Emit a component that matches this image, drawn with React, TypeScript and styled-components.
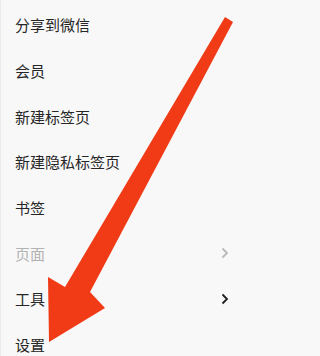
import React from 'react'
import styled, { createGlobalStyle } from 'styled-components'

const GlobalStyle = createGlobalStyle`
    html, body {
        margin: 0;
        padding: 0;
        background: #f8f8f8;
    }
    #root {
        width: 240px;
        height: 356px;
    }
`

const Screen = styled.div`
    position: relative;
    width: 240px;
    height: 356px;
    overflow: hidden;
    background: #f8f8f8;
    border-left: 1px solid #ebebeb;
    box-sizing: border-box;
    font-family: "Noto Sans CJK SC", "Noto Sans", sans-serif;
`

const Menu = styled.div`
    display: flex;
    flex-direction: column;
    padding-top: 2px;
`

const Item = styled.div<{ $disabled?: boolean }>`
    height: 45.7px;
    display: flex;
    align-items: center;
    justify-content: space-between;
    padding: 0 11px 0 14px;
    font-size: 15px;
    color: ${p => (p.$disabled ? '#b3b3b3' : '#262626')};
`

const Chevron = styled.svg<{ $disabled?: boolean }>`
    width: 8px;
    height: 12px;
    stroke: ${p => (p.$disabled ? '#b8b8b8' : '#1e1e1e')};
    fill: none;
    stroke-width: 1.8;
`

const ArrowLayer = styled.svg`
    position: absolute;
    left: 0;
    top: 0;
    width: 240px;
    height: 356px;
    pointer-events: none;
`

interface Entry {
    label: string,
    sub?: boolean,
    disabled?: boolean,
}

const entries: Entry[] = [
    { label: '分享到微信' },
    { label: '会员' },
    { label: '新建标签页' },
    { label: '新建隐私标签页' },
    { label: '书签' },
    { label: '页面', sub: true, disabled: true },
    { label: '工具', sub: true },
    { label: '设置' },
]

export default function App() {
    return (
        <Screen>
            <GlobalStyle />
            <Menu>
                {entries.map(e => (
                    <Item key={e.label} $disabled={e.disabled}>
                        <span>{e.label}</span>
                        {e.sub && (
                            <Chevron $disabled={e.disabled} viewBox="0 0 8 12">
                                <path d="M1.5 1.5 L6 6 L1.5 10.5" />
                            </Chevron>
                        )}
                    </Item>
                ))}
            </Menu>
            {/* red pointer drawn over the menu */}
            <ArrowLayer viewBox="-1 0 240 356">
                <polygon
                    points="223,17 231,22 88,292 103,308 47,342 46,277 63,287"
                    fill="#f13a16"
                />
            </ArrowLayer>
        </Screen>
    )
}
